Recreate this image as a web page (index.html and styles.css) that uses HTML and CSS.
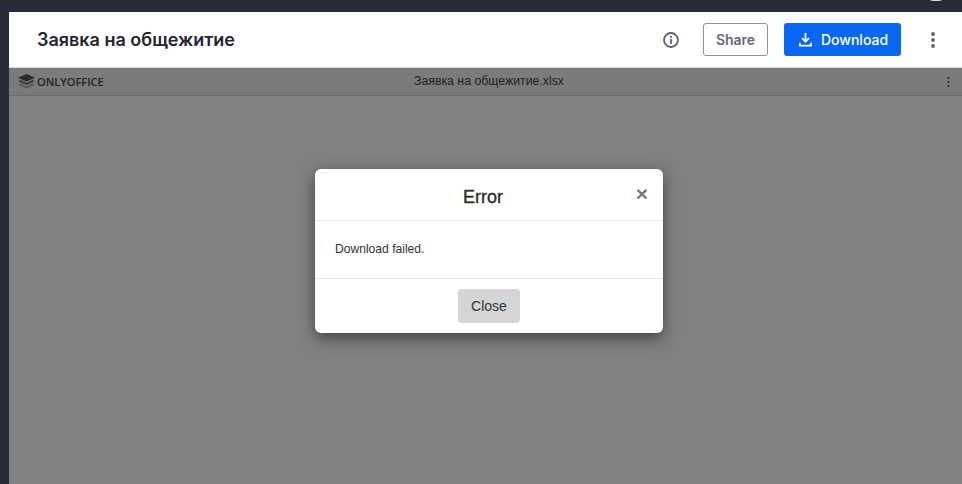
FILE: index.html
```html
<!DOCTYPE html>
<html lang="ru">
<head>
<meta charset="utf-8">
<title>Заявка на общежитие</title>
<link rel="stylesheet" href="styles.css">
</head>
<body>
<div class="topglow"></div>
<main class="panel">
  <header class="header">
    <h1 class="title">Заявка на общежитие</h1>
    <div class="actions">
      <svg class="info" width="18" height="18" viewBox="0 0 18 18" fill="none"><circle cx="9" cy="9" r="7" stroke="#5f6270" stroke-width="1.8"/><rect x="8.100" y="8" width="1.800" height="5" fill="#5f6270"/><rect x="8.100" y="5" width="1.800" height="1.800" fill="#5f6270"/></svg>
      <button class="share">Share</button>
      <button class="download">
        <svg width="13" height="15" viewBox="0 0 14 16" fill="none" stroke="#fff" stroke-width="1.900"><path d="M7 1v9M3.300 6.600 7 10.300l3.700-3.700"/><path d="M1 11.500v3h12v-3"/></svg>
        <span>Download</span>
      </button>
      <svg class="kebab" width="4" height="16" viewBox="0 0 4 16" fill="#5f6270"><circle cx="2" cy="2" r="1.900"/><circle cx="2" cy="8" r="1.900"/><circle cx="2" cy="14" r="1.900"/></svg>
    </div>
  </header>
  <section class="viewer">
    <div class="viewer-bar">
      <div class="logo">
        <svg width="17" height="15" viewBox="0 0 17 15"><path d="M8.500 0 17 3.800 8.500 7.600 0 3.800z" fill="#2a2a2a"/><path d="M2.500 6 8.500 8.700 14.500 6 17 7.200 8.500 11 0 7.200z" fill="#3c3c3c"/><path d="M2.500 9.500 8.500 12.200 14.500 9.500 17 10.700 8.500 14.500 0 10.700z" fill="#5a5a5a"/></svg>
        <span>ONLYOFFICE</span>
      </div>
      <div class="filename">Заявка на общежитие.xlsx</div>
      <svg class="viewer-kebab" width="3" height="10" viewBox="0 0 3 10" fill="#333"><rect x="0.500" y="0" width="2" height="2"/><rect x="0.500" y="4" width="2" height="2"/><rect x="0.500" y="8" width="2" height="2"/></svg>
    </div>
    <div class="viewer-body"></div>
  </section>
  <div class="dialog">
    <div class="dialog-head">
      <h2 class="dialog-title">Error</h2>
      <span class="dialog-x">×</span>
    </div>
    <div class="dialog-body">Download failed.</div>
    <div class="dialog-foot"><button class="close">Close</button></div>
  </div>
</main>
</body>
</html>
```
FILE: styles.css
```css
* { box-sizing: border-box; }
html, body { height: 100%; }
body {
  margin: 0;
  background: #282b36;
  padding: 12px 0 0 9px;
  overflow: hidden;
  position: relative;
  font-family: Inter, "Liberation Sans", sans-serif;
}
.topglow {
  position: absolute;
  top: -4px;
  right: 18px;
  width: 16px;
  height: 5px;
  border-radius: 0 0 8px 8px;
  background: #d8d8d8;
}
.panel {
  height: 472px;
  display: flex;
  flex-direction: column;
  position: relative;
  background: #fff;
}
.header {
  height: 55px;
  flex: none;
  display: flex;
  align-items: center;
  justify-content: space-between;
  padding: 0 27px 0 28px;
  background: #fff;
}
.title {
  margin: 0;
  font-size: 18px;
  font-weight: 600;
  color: #23252f;
  line-height: 24px;
}
.actions {
  display: flex;
  align-items: center;
}
.info { margin-right: 23px; }
.share {
  width: 65px;
  height: 33px;
  border: 1px solid #8f919c;
  border-radius: 3px;
  background: #fff;
  color: #666874;
  font: 600 14px Inter, "Liberation Sans", sans-serif;
  padding: 0;
  margin-right: 16px;
}
.download {
  width: 117px;
  height: 33px;
  border: 0;
  border-radius: 3px;
  background: #0868f5;
  color: #fff;
  font: 500 14px Inter, "Liberation Sans", sans-serif;
  padding: 0 0 0 15px;
  display: flex;
  align-items: center;
  justify-content: flex-start;
  gap: 9px;
  margin-right: 30px;
}
.viewer {
  flex: 1;
  display: flex;
  flex-direction: column;
  background: #818181;
  border-top: 1px solid #d9d9d9;
}
.viewer-bar {
  height: 28px;
  flex: none;
  display: flex;
  align-items: center;
  position: relative;
  padding: 0 12px 0 9px;
  background: #7b7b7b;
  border-bottom: 1px solid #6b6b6b;
  justify-content: space-between;
}
.logo {
  display: flex;
  align-items: center;
  gap: 2px;
  color: #242424;
  font: 600 11px "Open Sans", "Liberation Sans", sans-serif;
}
.filename {
  position: absolute;
  left: 0;
  right: 0;
  text-align: center;
  font: 12.300px "Liberation Sans", Arial, sans-serif;
  color: #1f1f1f;
  padding-left: 7px;
  margin-top: -1px;
}
.viewer-body { flex: 1; }
.dialog {
  position: absolute;
  left: 306px;
  top: 157px;
  width: 348px;
  height: 164px;
  background: #fff;
  border-radius: 6px;
  box-shadow: 0 5px 15px rgba(0, 0, 0, 0.5);
  display: flex;
  flex-direction: column;
  font-family: "Liberation Sans", Arial, sans-serif;
  color: #333;
}
.dialog-head {
  height: 52px;
  flex: none;
  display: flex;
  align-items: center;
  justify-content: center;
  border-bottom: 1px solid #e5e5e5;
  position: relative;
  padding: 6px 12px 0 0;
}
.dialog-title {
  margin: 0;
  font: 400 18px "Liberation Sans", Arial, sans-serif;
  -webkit-text-stroke: 0.35px #2b2b2b;
  color: #2b2b2b;
}
.dialog-x {
  position: absolute;
  right: 15px;
  top: 12px;
  font: 700 21px/26px "Liberation Sans", Arial, sans-serif;
  color: #777;
}
.dialog-body {
  height: 58px;
  flex: none;
  padding: 20px 20px 0;
  font-size: 12.100px;
  line-height: 17px;
  border-bottom: 1px solid #e5e5e5;
}
.dialog-foot {
  flex: 1;
  display: flex;
  justify-content: center;
  align-items: flex-start;
  padding: 10px 0 0;
}
.close {
  width: 62px;
  height: 34px;
  border: 0;
  border-radius: 4px;
  background: #d4d5d7;
  color: #333;
  font: 14px "Liberation Sans", Arial, sans-serif;
  padding: 0;
}
```
